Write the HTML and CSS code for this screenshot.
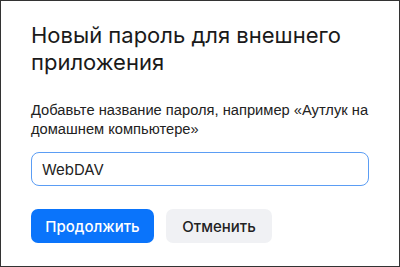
FILE: index.html
```html
<!DOCTYPE html>
<html lang="ru">
<head>
<meta charset="utf-8">
<link rel="stylesheet" href="styles.css">
</head>
<body>
<div class="dialog">
  <h1 class="title">Новый пароль для внешнего приложения</h1>
  <p class="hint">Добавьте название пароля, например «Аутлук на домашнем компьютере»</p>
  <input class="field" type="text" value="WebDAV">
  <div class="actions">
    <button class="btn btn-primary">Продолжить</button>
    <button class="btn btn-secondary">Отменить</button>
  </div>
</div>
</body>
</html>
```

FILE: styles.css
```css
html, body {
  margin: 0;
  padding: 0;
  background: #fff;
}
.dialog {
  box-sizing: border-box;
  width: 400px;
  height: 267px;
  border: 1px solid #333;
  padding: 21px 20px 0 30px;
  display: flex;
  flex-direction: column;
  align-items: flex-start;
  font-family: "Inter", "Liberation Sans", sans-serif;
  color: #1f1f1f;
}
.title {
  margin: 0;
  max-width: 340px;
  font-size: 22px;
  line-height: 27px;
  font-weight: 400;
  color: #1a1a1a;
}
.hint {
  margin: 25px 0 0;
  font-family: "Liberation Sans", Arial, sans-serif;
  font-size: 14.7px;
  line-height: 19px;
  color: #222;
}
.field {
  box-sizing: border-box;
  margin-top: 13px;
  width: 338px;
  height: 34px;
  border: 1.5px solid #5b9df4;
  border-radius: 8px;
  padding: 0 10px;
  font-family: "Inter", "Liberation Sans", sans-serif;
  font-size: 15px;
  color: #222;
  outline: none;
}
.actions {
  margin-top: 23px;
  display: flex;
  gap: 12px;
}
.btn {
  box-sizing: border-box;
  height: 34px;
  border: none;
  border-radius: 7px;
  font-family: "Inter", "Liberation Sans", sans-serif;
  font-size: 15px;
  font-weight: 500;
  padding: 0;
}
.btn-primary {
  width: 123px;
  background: #0a74fb;
  color: #fff;
}
.btn-secondary {
  width: 106px;
  background: #f0f1f4;
  color: #222;
}
```
